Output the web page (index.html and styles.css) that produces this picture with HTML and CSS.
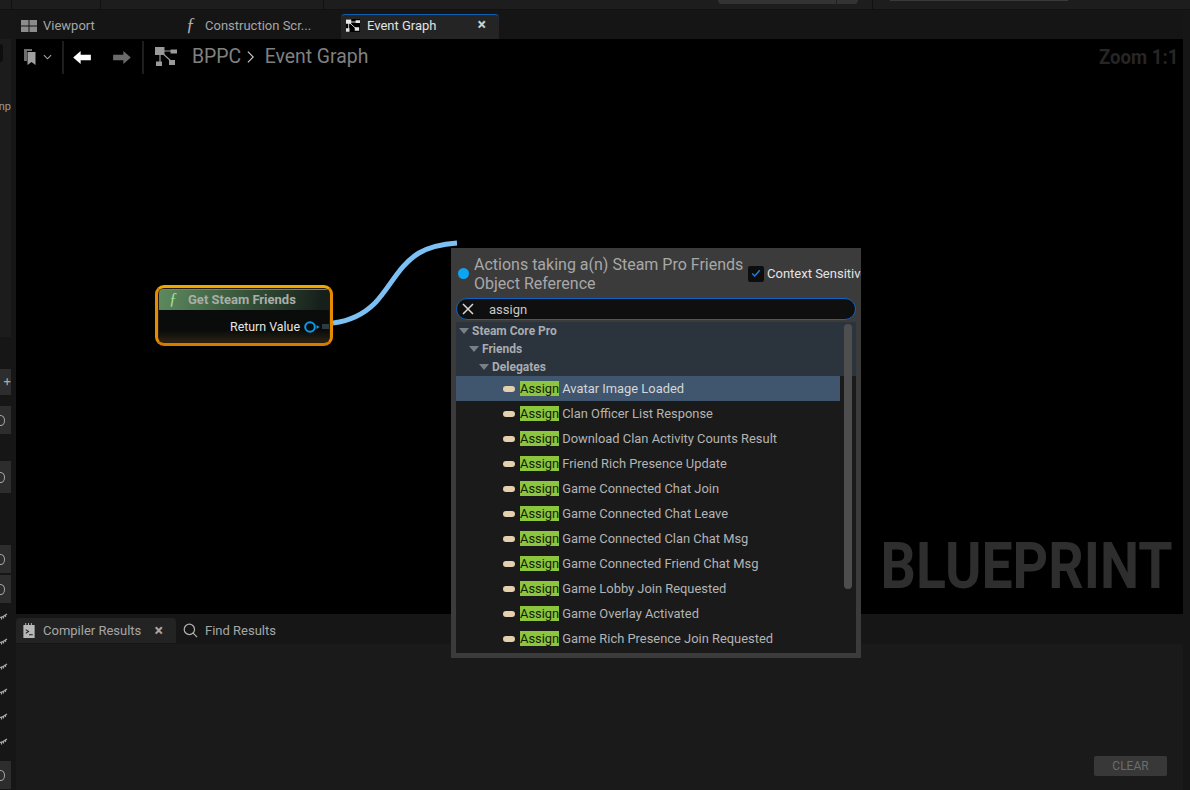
FILE: index.html
```html
<!DOCTYPE html>
<html lang="en">
<head>
  <meta charset="UTF-8" />
  <title>BPPC - Event Graph</title>
  <link rel="stylesheet" href="styles.css">
</head>
<body>
  <div class="toolbar-strip">
    <span class="strip-cell cell-a"></span>
    <span class="strip-cell cell-b"></span>
    <span class="strip-cell cell-c"></span>
    <span class="strip-btn"></span>
    <span class="strip-sep"></span>
    <span class="strip-field"></span>
  </div>

  <div class="workspace">
    <!-- left details panel, cut off by the screenshot -->
    <div class="side-left">
      <div class="side-top">
        <div class="side-round"></div>
        <div class="side-letters">np</div>
      </div>
      <div class="side-box plus">+</div>
      <div class="side-box tall1"><span class="ring"></span></div>
      <div class="side-box tall2"><span class="ring"></span></div>
      <div class="side-box tall3"><span class="ring"></span></div>
      <div class="side-box tall4"><span class="ring"></span></div>
      <div class="lashes">
        <svg class="lash" viewBox="0 0 8 8"><path d="M0 5.500C3 5 5 3.500 7 2M1.500 5.500V7.500M3.500 4.800V6.500M5.500 3.500V5" /></svg>
        <svg class="lash" viewBox="0 0 8 8"><path d="M0 5.500C3 5 5 3.500 7 2M1.500 5.500V7.500M3.500 4.800V6.500M5.500 3.500V5" /></svg>
        <svg class="lash" viewBox="0 0 8 8"><path d="M0 5.500C3 5 5 3.500 7 2M1.500 5.500V7.500M3.500 4.800V6.500M5.500 3.500V5" /></svg>
        <svg class="lash" viewBox="0 0 8 8"><path d="M0 5.500C3 5 5 3.500 7 2M1.500 5.500V7.500M3.500 4.800V6.500M5.500 3.500V5" /></svg>
        <svg class="lash" viewBox="0 0 8 8"><path d="M0 5.500C3 5 5 3.500 7 2M1.500 5.500V7.500M3.500 4.800V6.500M5.500 3.500V5" /></svg>
        <svg class="lash" viewBox="0 0 8 8"><path d="M0 5.500C3 5 5 3.500 7 2M1.500 5.500V7.500M3.500 4.800V6.500M5.500 3.500V5" /></svg>
      </div>
      <div class="side-box tall5"><span class="ring"></span></div>
    </div>

    <div class="center">
      <div class="doc-tabs">
        <div class="doc-tab viewport-tab">
          <svg class="tab-icon" viewBox="0 0 16 12"><path d="M0 0h7.500v5.500H0zM8.500 0H16v5.500H8.500zM0 6.500h7.500V12H0zM8.500 6.500H16V12H8.500z" fill="#8c8c8c" /></svg>
          Viewport
        </div>
        <div class="doc-tab construction-tab">
          <span class="fn">ƒ</span>
          Construction Scr...
        </div>
        <div class="doc-tab active">
          <svg class="tab-icon graph" viewBox="0 0 16 14"><use href="#graph-shape" /></svg>
          Event Graph
          <span class="tab-close">×</span>
        </div>
      </div>

      <div class="graph">
        <div class="graph-bar">
          <svg class="bookmark" viewBox="0 0 12 16"><path d="M0 0h8v2H3v10H0z" fill="#6e6e6e" /><path d="M3.500 3h8v13l-4-3-4 3z" fill="#a0a0a0" /></svg>
          <svg class="chev" viewBox="0 0 10 6"><path d="M1 1l4 4 4-4" /></svg>
          <span class="bar-sep"></span>
          <svg class="arrow" viewBox="0 0 20 14"><path d="M0 7l8-7v4h11v6H8v4z" fill="#fff" /></svg>
          <svg class="arrow fwd" viewBox="0 0 20 14"><path d="M20 7l-8-7v4H1v6h11v4z" fill="#6b6b6b" /></svg>
          <span class="bar-sep second"></span>
          <svg class="crumb-icon" viewBox="0 0 22 20"><use href="#graph-shape-big" /></svg>
          <span class="crumb first">BPPC</span>
          <svg class="crumb-sep" viewBox="0 0 9 14"><path d="M1 1l6 6-6 6" /></svg>
          <span class="crumb">Event Graph</span>
          <span class="zoom-label">Zoom 1:1</span>
        </div>
        <div class="watermark">BLUEPRINT</div>

        <svg class="wire" viewBox="0 0 130 90"><path d="M0 84C16 82 30 76 42 64C58 47 66 26 86 14C98 7 110 5 124 4" /></svg>

        <div class="node">
          <div class="node-inner">
            <div class="node-head"><span class="node-fn">ƒ</span>Get Steam Friends</div>
            <div class="node-body">
              Return Value
              <svg class="pin" viewBox="0 0 16 12"><circle cx="6" cy="6" r="4.800" /><path d="M12.500 4l3 2-3 2z" fill="#0a9bea" stroke="none" /></svg>
              <span class="pin-stub"></span>
            </div>
          </div>
        </div>
      </div>

      <div class="bottom-tabs">
        <div class="bottom-tab active">
          <svg class="log-icon" viewBox="0 0 12 16"><path d="M0 2h2V0h1v2h2V0h1v2h2V0h1v2h3v14H0z" fill="#b8b8b8" /><path d="M2.500 7l3 2-3 2M6 12.500h4" fill="none" stroke="#1c1c1c" stroke-width="1.100" /></svg>
          Compiler Results
          <span class="tab-close dim">×</span>
        </div>
        <div class="bottom-tab">
          <svg class="search-icon" viewBox="0 0 16 16"><circle cx="6.800" cy="6.800" r="5.500" /><path d="M10.800 10.800L15 15" /></svg>
          Find Results
        </div>
      </div>
      <div class="results">
        <button class="clear-btn">CLEAR</button>
      </div>
    </div>

    <div class="side-right"></div>

    <!-- action menu sits over the graph and the results panel -->
    <div class="action-menu">
      <div class="menu-head">
        <span class="context-dot"></span>
        <div class="menu-title">Actions taking a(n) Steam Pro Friends Object Reference</div>
        <span class="check"><svg viewBox="0 0 12 10"><path d="M1.500 5l3 3 6-7" /></svg></span>
        <span class="check-label">Context Sensitive</span>
      </div>
      <div class="search">
        <svg class="search-x" viewBox="0 0 12 12"><path d="M1 1l10 10M11 1L1 11" /></svg>
        <span>assign</span>
      </div>
      <div class="tree">
        <div class="tree-list">
          <div class="cat lvl0"><i class="tri"></i>Steam Core Pro</div>
          <div class="cat lvl1"><i class="tri"></i>Friends</div>
          <div class="cat lvl2"><i class="tri"></i>Delegates</div>
          <div class="item selected"><i class="pill"></i><mark>Assign</mark>Avatar Image Loaded</div>
          <div class="item"><i class="pill"></i><mark>Assign</mark>Clan Officer List Response</div>
          <div class="item"><i class="pill"></i><mark>Assign</mark>Download Clan Activity Counts Result</div>
          <div class="item"><i class="pill"></i><mark>Assign</mark>Friend Rich Presence Update</div>
          <div class="item"><i class="pill"></i><mark>Assign</mark>Game Connected Chat Join</div>
          <div class="item"><i class="pill"></i><mark>Assign</mark>Game Connected Chat Leave</div>
          <div class="item"><i class="pill"></i><mark>Assign</mark>Game Connected Clan Chat Msg</div>
          <div class="item"><i class="pill"></i><mark>Assign</mark>Game Connected Friend Chat Msg</div>
          <div class="item"><i class="pill"></i><mark>Assign</mark>Game Lobby Join Requested</div>
          <div class="item"><i class="pill"></i><mark>Assign</mark>Game Overlay Activated</div>
          <div class="item"><i class="pill"></i><mark>Assign</mark>Game Rich Presence Join Requested</div>
        </div>
        <div class="scroll"><div class="scroll-thumb"></div></div>
      </div>
    </div>
  </div>

  <svg class="defs" width="0" height="0">
    <defs>
      <g id="graph-shape" fill="#e6e6e6" stroke="#e6e6e6">
        <path d="M3 3L3 11M3 3L12 11M3 3H12" fill="none" stroke-width="1" />
        <path d="M0 0h6v5H0zM11 1h5v3h-5zM0 10h4v4H0zM10 9h5v4h-5z" stroke="none" />
      </g>
      <g id="graph-shape-big">
        <path d="M5 4V15M5 4L17 15M5 4H18" fill="none" stroke="#9a9a9a" stroke-width="1.200" />
        <path d="M0 0h9.500v8H0zM15.500 2.500H22v4h-6.500zM1 14.500h6V19H1zM14 13h6v5h-6z" fill="#9a9a9a" />
      </g>
    </defs>
  </svg>
</body>
</html>
```

FILE: styles.css
```css
html, body {
  margin: 0;
  height: 790px;
  overflow: hidden;
  background: #151515;
  font-family: Roboto, "Open Sans", sans-serif;
  color: #c0c0c0;
}
.defs {
  position: absolute;
}

/* top strip */
.toolbar-strip {
  height: 9px;
  background: #1d1d1d;
  display: flex;
  border-bottom: 1px solid #111;
}
.strip-cell {
  box-sizing: border-box;
  border-right: 1px solid #111;
}
.cell-a { width: 12px; }
.cell-b { width: 89px; }
.cell-c { width: 223px; }
.strip-btn {
  width: 140px;
  height: 4px;
  margin-left: 394px;
  background: linear-gradient(90deg, #333 118px, #222 118px, #222 119px, #333 119px);
  border-radius: 0 0 4px 4px;
}
.strip-sep {
  width: 1px;
  margin-left: 14px;
  background: #111;
}
.strip-field {
  width: 178px;
  height: 1px;
  margin-left: 17px;
  background: #3a3a3a;
}

.workspace {
  position: relative;
  height: 780px;
  display: flex;
}

/* left panel */
.side-left {
  width: 16px;
  background: #161616;
  overflow: hidden;
  display: flex;
  flex-direction: column;
  align-items: flex-start;
}
.side-top {
  width: 11px;
  height: 298px;
  margin-top: 29px;
  background: #1c1c1c;
  overflow: hidden;
}
.side-round {
  width: 3px;
  height: 18px;
  margin-top: 5px;
  background: #0e0e0e;
  border-radius: 0 9px 9px 0;
}
.side-letters {
  width: 11px;
  margin-top: 38px;
  overflow: hidden;
  direction: rtl;
  font-size: 11px;
  line-height: 14px;
  color: #999;
}
.side-box {
  width: 11px;
  background: #2d2d2d;
  color: #aaa;
  display: flex;
  align-items: center;
  overflow: hidden;
  flex: none;
}
.side-box.plus {
  height: 26px;
  margin-top: 32px;
  font-size: 13px;
  justify-content: flex-end;
  line-height: 26px;
}
.tall1 { height: 28px; margin-top: 11px; }
.tall2 { height: 32px; margin-top: 27px; }
.tall3 { height: 28px; margin-top: 52px; }
.tall4 { height: 28px; margin-top: 2px; }
.tall5 { height: 28px; margin-top: 16px; }
.ring {
  flex: none;
  width: 7px;
  height: 9px;
  margin-left: -4px;
  border: 1px solid #aaa;
  border-radius: 50%;
}
.lashes {
  display: flex;
  flex-direction: column;
  gap: 17px;
  padding-top: 9px;
}
.lash {
  width: 8px;
  height: 8px;
  fill: none;
  stroke: #a8a8a8;
  stroke-width: 1.200;
}

/* centre column */
.center {
  width: 1167px;
  display: flex;
  flex-direction: column;
}
.doc-tabs {
  height: 29px;
  display: flex;
  font-size: 13px;
  color: #a6a6a6;
}
.doc-tab {
  position: relative;
  display: flex;
  align-items: center;
  height: 29px;
}
.viewport-tab {
  width: 165px;
  padding: 2px 0 0 5px;
  box-sizing: border-box;
}
.construction-tab {
  width: 160px;
  padding: 2px 0 0 5px;
  box-sizing: border-box;
}
.doc-tab.active {
  margin-top: 4px;
  height: 25px;
  width: 158px;
  box-sizing: border-box;
  padding: 0 0 4px 5px;
  background: #242424;
  border-top: 1px solid #0f5db0;
  border-radius: 4px 4px 0 0;
  color: #e2e2e2;
}
.tab-icon {
  width: 16px;
  height: 12px;
  margin-right: 6px;
}
.tab-icon.graph {
  width: 14px;
  height: 13px;
  margin-right: 7px;
}
.fn {
  font-family: "Liberation Serif", serif;
  font-style: italic;
  font-size: 18px;
  color: #b0b0b0;
  width: 14px;
  margin-right: 5px;
  text-align: left;
}
.tab-close {
  margin-left: auto;
  margin-right: 13px;
  font-size: 16px;
  line-height: 16px;
  color: #cfcfcf;
  font-weight: 700;
}
.tab-close.dim {
  color: #a8a8a8;
  margin-right: 13px;
}

/* graph area */
.graph {
  position: relative;
  height: 575px;
  background: #000;
  overflow: hidden;
}
.graph-bar {
  height: 36px;
  display: flex;
  align-items: center;
  padding-left: 8px;
}
.bookmark {
  width: 12px;
  height: 16px;
}
.chev {
  width: 9px;
  height: 6px;
  margin-left: 7px;
  fill: none;
  stroke: #a8a8a8;
  stroke-width: 1.200;
}
.bar-sep {
  width: 2px;
  height: 33px;
  background: #1e1e1e;
  margin-left: 10px;
}
.bar-sep.second {
  margin-left: 11px;
}
.arrow {
  width: 19px;
  height: 13px;
  margin-left: 9px;
}
.arrow.fwd {
  margin-left: 20px;
}
.crumb-icon {
  width: 22px;
  height: 20px;
  margin-left: 11px;
}
.crumb {
  font-size: 19.400px;
  color: #808080;
  margin-bottom: 2px;
}
.crumb.first {
  margin-left: 15px;
}
.crumb-sep {
  width: 8px;
  height: 14px;
  margin: 0 9.500px 0 6px;
  fill: none;
  stroke: #d0d0d0;
  stroke-width: 1.200;
}
.zoom-label {
  margin-left: auto;
  margin-right: 5px;
  font-size: 20px;
  font-weight: 700;
  color: #262626;
  transform: scaleX(0.93);
  transform-origin: right center;
}
.watermark {
  position: absolute;
  right: 11px;
  bottom: 10px;
  font-size: 64px;
  line-height: 75px;
  font-weight: 700;
  color: #2e2e2e;
  transform: scaleX(0.865);
  transform-origin: right center;
}
.wire {
  position: absolute;
  left: 317px;
  top: 200px;
  width: 130px;
  height: 90px;
  fill: none;
  stroke: #7cc0f4;
  stroke-width: 5;
}
.node {
  position: absolute;
  left: 139px;
  top: 246px;
  width: 178px;
  height: 61px;
  box-sizing: border-box;
  border: 3px solid;
  border-color: #f0a800 #e68a00 #d97a00;
  border-radius: 9px;
  padding: 1px;
  background: #2a1d08;
}
.node-inner {
  height: 100%;
  border-radius: 4px;
  overflow: hidden;
  background: linear-gradient(#0a0c0b 78%, #2a2114);
}
.node-head {
  height: 21px;
  display: flex;
  align-items: center;
  font-size: 13px;
  font-weight: 700;
  color: #a9aea9;
  background: linear-gradient(100deg, #5e8a5e, #3a5a3e 45%, #161f1a 95%);
  border-top: 1px solid #6e8a6e;
  box-sizing: border-box;
  padding: 0 0 2px 10px;
}
.node-fn {
  font-family: "Liberation Serif", serif;
  font-style: italic;
  font-weight: 400;
  font-size: 16px;
  color: #a8e0a0;
  width: 14px;
  margin-right: 5px;
}
.node-body {
  display: flex;
  align-items: center;
  justify-content: flex-end;
  height: 31px;
  box-sizing: border-box;
  padding-top: 2px;
  font-size: 12.400px;
  color: #e6e6e6;
}
.pin {
  width: 16px;
  height: 12px;
  margin-left: 4px;
  fill: none;
  stroke: #0a9bea;
  stroke-width: 2;
}
.pin-stub {
  width: 7px;
  height: 5px;
  margin-left: 2px;
  background: #2c3a44;
}

/* bottom panel */
.bottom-tabs {
  height: 30px;
  display: flex;
  font-size: 13px;
  color: #a6a6a6;
  background: #161616;
}
.bottom-tab {
  height: 25px;
  margin-top: 4px;
  display: flex;
  align-items: center;
  padding-left: 7px;
  box-sizing: border-box;
}
.bottom-tab.active {
  width: 160px;
  background: #232323;
  border-radius: 4px 4px 0 0;
}
.log-icon {
  width: 12px;
  height: 15px;
  margin-right: 8px;
}
.search-icon {
  width: 15px;
  height: 15px;
  margin-right: 7px;
  fill: none;
  stroke: #b0b0b0;
  stroke-width: 1.300;
}
.results {
  flex: 1;
  position: relative;
  background: #1a1a1a;
  display: flex;
  justify-content: flex-end;
  align-items: flex-end;
  padding: 0 16px 14px 0;
}
.clear-btn {
  width: 73px;
  height: 20px;
  padding: 0;
  border: none;
  border-radius: 2px;
  background: #383838;
  color: #6c6c6c;
  font-family: Roboto, sans-serif;
  font-size: 12px;
}
.side-right {
  width: 7px;
  background: #161616;
}

/* action menu */
.action-menu {
  position: absolute;
  left: 451px;
  top: 238px;
  width: 410px;
  height: 410px;
  box-sizing: border-box;
  background: #3b3b3b;
  padding: 0 5px 5px;
  overflow: hidden;
  display: flex;
  flex-direction: column;
}
.menu-head {
  height: 50px;
  flex: none;
  display: flex;
  align-items: center;
  white-space: nowrap;
  padding: 1px 0 0 0;
  box-sizing: border-box;
  margin-right: -20px;
}
.context-dot {
  flex: none;
  width: 11px;
  height: 11px;
  margin-left: 2px;
  margin-right: 5px;
  border-radius: 50%;
  background: #0aa6f5;
}
.menu-title {
  flex: none;
  width: 274px;
  white-space: normal;
  font-size: 16px;
  line-height: 19px;
  color: #a8a8a8;
}
.check {
  flex: none;
  width: 16px;
  height: 16px;
  background: #0d0d0d;
  border-radius: 2px;
  display: flex;
  align-items: center;
  justify-content: center;
}
.check svg {
  width: 10px;
  height: 9px;
  fill: none;
  stroke: #1a7fe8;
  stroke-width: 1.800;
}
.check-label {
  margin-left: 3px;
  font-size: 13px;
  color: #e4e4e4;
}
.search {
  flex: none;
  height: 22px;
  margin: 0 0 2px 0;
  width: 400px;
  box-sizing: border-box;
  border: 1px solid #0f63c2;
  border-radius: 11px;
  background: #0f0f0f;
  display: flex;
  align-items: center;
  font-size: 13px;
  color: #c8c8c8;
}
.search-x {
  width: 12px;
  height: 12px;
  margin-left: 5px;
  margin-right: 15px;
  fill: none;
  stroke: #d8d8d8;
  stroke-width: 1.500;
}
.tree {
  flex: 1;
  min-height: 0;
  display: flex;
  background: #1a1a1a;
  width: 400px;
}
.tree-list {
  flex: 1;
  overflow: hidden;
}
.cat {
  height: 18px;
  display: flex;
  align-items: center;
  background: #2b333d;
  font-size: 12px;
  font-weight: 700;
  color: #a8acb0;
}
.tri {
  width: 0;
  height: 0;
  border: 5px solid transparent;
  border-top: 6px solid #7a7f85;
  border-bottom: 0;
  margin-right: 3px;
}
.lvl0 { padding-left: 3px; }
.lvl1 { padding-left: 13px; }
.lvl2 { padding-left: 23px; }
.item {
  height: 25px;
  display: flex;
  align-items: center;
  padding-left: 47px;
  font-size: 12.900px;
  color: #b4b4b4;
  white-space: nowrap;
}
.item.selected {
  background: #40566f;
  color: #d6d6d6;
}
.pill {
  width: 12px;
  height: 6px;
  border-radius: 3px;
  background: #e4cfae;
  margin-right: 5px;
}
mark {
  background: #8cc63f;
  color: #142006;
  height: 15px;
  line-height: 15px;
  margin-right: 3px;
}
.scroll {
  width: 16px;
  flex: none;
  background: linear-gradient(#2b333d 54px, #1a1a1a 54px);
}
.scroll-thumb {
  width: 8px;
  height: 265px;
  margin: 2px 0 0 4px;
  background: #4e4e4e;
  border-radius: 4px;
}
```
